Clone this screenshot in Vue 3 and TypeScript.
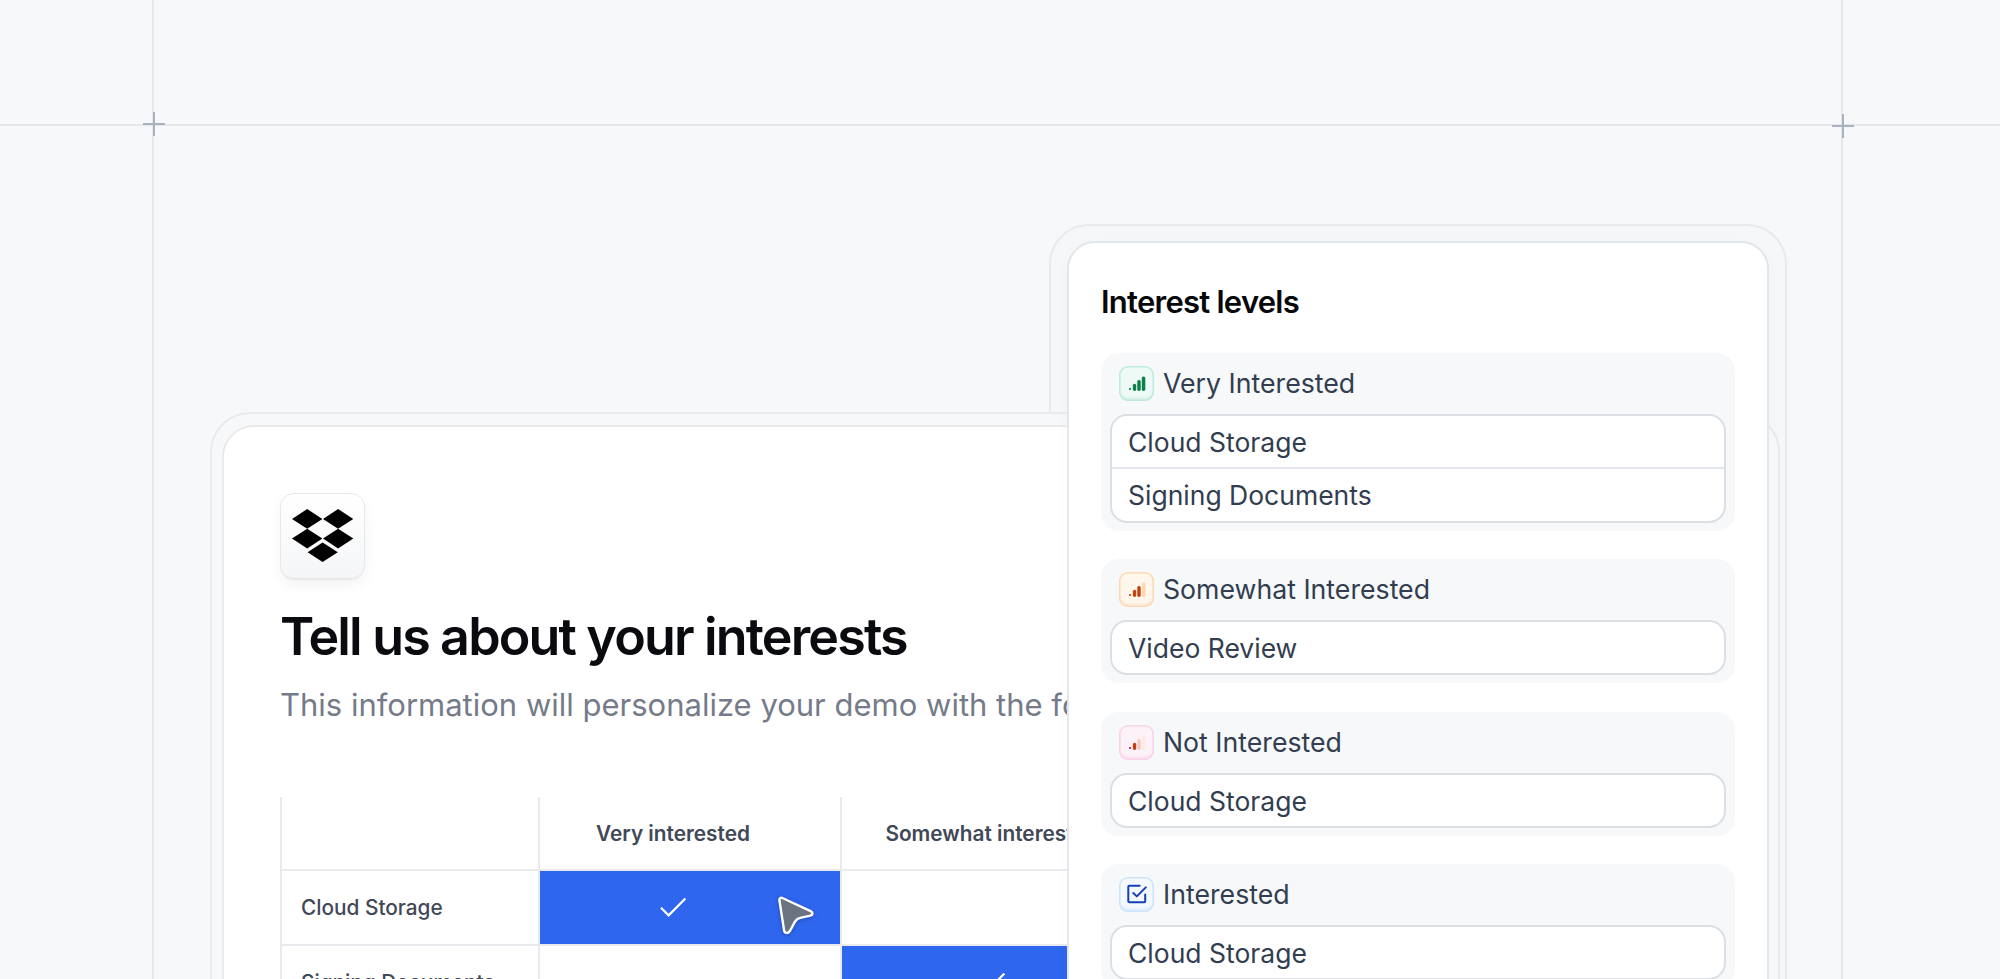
<script setup lang="ts">
import { ref } from 'vue'

interface Bar {
  x: number
  y: number
  w: number
  color: string
}

interface Group {
  name: string
  tone: string
  bars: Bar[]
  items: string[]
}

const signal = (colors: string[]): Bar[] => [
  { x: 10, y: 22, w: 2, color: colors[0] },
  { x: 13.9, y: 17.7, w: 3.3, color: colors[1] },
  { x: 18.3, y: 14, w: 3.4, color: colors[2] },
  { x: 22.8, y: 10.4, w: 3.5, color: colors[3] }
]

const groups = ref<Group[]>([
  {
    name: 'Very Interested',
    tone: 'green',
    bars: signal(['#0b8048', '#0b8048', '#0b8048', '#0b8048']),
    items: ['Cloud Storage', 'Signing Documents']
  },
  {
    name: 'Somewhat Interested',
    tone: 'orange',
    bars: signal(['#c2410c', '#c2410c', '#c2410c', '#fed7aa']),
    items: ['Video Review']
  },
  {
    name: 'Not Interested',
    tone: 'pink',
    bars: signal(['#be185d', '#c2410c', '#f3c9c0', '#ffeadf']),
    items: ['Cloud Storage']
  },
  { name: 'Interested', tone: 'blue', bars: [], items: ['Cloud Storage'] }
])

const columns = ref(['Very interested', 'Somewhat interested'])
const rows = ref([
  { name: 'Cloud Storage', picked: 0 },
  { name: 'Signing Documents', picked: 1 }
])
</script>

<template>
  <div class="canvas">
    <div class="line vertical left"></div>
    <div class="line vertical right"></div>
    <div class="line horizontal"></div>
    <div class="plus plusLeft"></div>
    <div class="plus plusRight"></div>

    <div class="panelFrame"></div>

    <div class="formFrame">
      <div class="form">
        <div class="logo">
          <svg width="62" height="54" viewBox="0 0 62 54">
            <path d="M0 9.9 15.2 0l15.2 9.9-15.2 9.8zM31 9.9 46.1 0l15.2 9.9-15.2 9.8z" />
            <path d="M0 29.6l15.2-9.9 15.2 9.9-15.2 9.8zM31 29.6l15.1-9.9 15.2 9.9-15.2 9.8z" />
            <path d="M15.6 43.2l15-9.8 15.2 9.8-15.2 9.8z" />
          </svg>
        </div>
        <h1 class="title">Tell us about your interests</h1>
        <p class="subtitle">This information will personalize your demo with the following</p>

        <div class="table">
          <div class="row header">
            <div class="cell name"></div>
            <div v-for="column in columns" :key="column" class="cell option">{{ column }}</div>
          </div>
          <div v-for="row in rows" :key="row.name" class="row">
            <div class="cell name">{{ row.name }}</div>
            <div
              v-for="(column, index) in columns"
              :key="column"
              class="cell option"
              :class="{ picked: row.picked === index }"
            >
              <svg v-if="row.picked === index" width="27" height="21" viewBox="0 0 27 21">
                <path d="M1 10.8 8.6 18.4 25.4 1.5" fill="none" stroke="#fff" stroke-width="2.2" />
              </svg>
            </div>
          </div>
        </div>
      </div>
    </div>

    <svg class="cursor" width="44" height="48" viewBox="0 0 44 48">
      <path
        d="M4.4 6.3C4.2 4.3 5.6 3.2 7.4 4L35.6 17.2C38.2 18.4 38 21 35.5 21.6L25.2 23.9C22.4 24.6 21.3 25.3 20 27.6L14.8 37.2C13.3 39.8 9.6 39.4 9.1 36.5Z"
        fill="#6b7280"
        stroke="#fff"
        stroke-width="2.4"
        stroke-linejoin="round"
      />
    </svg>

    <div class="panel">
      <h2 class="panelTitle">Interest levels</h2>
      <div class="groups">
        <div v-for="group in groups" :key="group.name" class="group">
          <div class="groupHead">
            <div class="icon" :class="group.tone">
              <svg width="35" height="35" viewBox="0 0 35 35">
                <rect
                  v-for="bar in group.bars"
                  :key="bar.x"
                  :x="bar.x"
                  :y="bar.y"
                  :width="bar.w"
                  :height="bar.w === 2 ? 2 : 24.9 - bar.y"
                  :rx="bar.w === 2 ? 0.8 : 1.6"
                  :fill="bar.color"
                />
                <g
                  v-if="!group.bars.length"
                  fill="none"
                  stroke="#1540b8"
                  stroke-width="2"
                  stroke-linecap="round"
                  stroke-linejoin="round"
                >
                  <path d="M20.7 8.8H10.3a1 1 0 0 0-1 1v14.4a1 1 0 0 0 1 1h14.9a1 1 0 0 0 1-1v-6.6" />
                  <path d="M14.3 16 17.8 19.4 26.8 10.4" />
                </g>
              </svg>
            </div>
            <span>{{ group.name }}</span>
          </div>
          <div class="items">
            <div v-for="item in group.items" :key="item" class="item">{{ item }}</div>
          </div>
        </div>
      </div>
    </div>
  </div>
</template>

<style>
body {
  margin: 0;
  background: #f7f8fa;
}
</style>

<style scoped>
.canvas {
  position: relative;
  width: 2000px;
  height: 979px;
  overflow: hidden;
  background: #f7f8fa;
  font-family: Inter, 'Liberation Sans', sans-serif;
}
.line {
  position: absolute;
  background: #e5e7e9;
}
.vertical {
  top: 0;
  width: 2px;
  height: 979px;
}
.left {
  left: 152px;
}
.right {
  left: 1841px;
}
.horizontal {
  top: 124px;
  left: 0;
  width: 2000px;
  height: 2px;
}
.plus {
  position: absolute;
  width: 22px;
  height: 24px;
  background:
    linear-gradient(#a9b2bf, #a9b2bf) 10px 0 / 2px 24px no-repeat,
    linear-gradient(#a9b2bf, #a9b2bf) 0 11px / 22px 2px no-repeat;
}
.plusLeft {
  left: 143px;
  top: 112px;
}
.plusRight {
  left: 1832px;
  top: 114px;
}
.panelFrame {
  position: absolute;
  left: 1049px;
  top: 224px;
  width: 738px;
  height: 800px;
  box-sizing: border-box;
  border: 2px solid #e8eaec;
  border-radius: 40px;
  background: #f6f7f9;
}
.formFrame {
  position: absolute;
  left: 210px;
  top: 412px;
  width: 1570px;
  height: 640px;
  box-sizing: border-box;
  padding: 11px 10px;
  border: 2px solid #e8eaec;
  border-radius: 40px;
  background: #f7f8fa;
}
.form {
  height: 700px;
  width: 1545px;
  box-sizing: border-box;
  padding: 66px 0 0 56px;
  border: 2px solid #e8eaec;
  border-radius: 32px;
  background: #fff;
  overflow: hidden;
}
.logo {
  display: flex;
  align-items: center;
  justify-content: center;
  width: 85px;
  height: 86px;
  box-sizing: border-box;
  border: 1px solid #e6e8ea;
  border-radius: 14px;
  background: linear-gradient(#fff, #f5f6f8);
  box-shadow: 0 1px 1px rgba(0, 0, 0, 0.06), 0 6px 14px rgba(0, 0, 0, 0.05);
}
.title {
  margin: 28px 0 0;
  font-size: 52px;
  font-weight: 600;
  line-height: 60px;
  letter-spacing: -1.84px;
  color: #0a0b0f;
  white-space: nowrap;
}
.subtitle {
  margin: 18px 0 0;
  font-size: 31px;
  line-height: 40px;
  color: #757b89;
  white-space: nowrap;
}
.table {
  width: 1160px;
  margin-top: 72px;
  color: #414857;
  font-size: 20.8px;
  font-weight: 500;
}
.row {
  display: flex;
  height: 75px;
  box-sizing: border-box;
  border-bottom: 2px solid #e9eaed;
}
.header {
  height: 74px;
}
.cell {
  display: flex;
  align-items: center;
  box-sizing: border-box;
  border-left: 2px solid #e9eaed;
}
.name {
  width: 258px;
  padding-left: 19px;
}
.option {
  width: 302px;
  padding-right: 34px;
  justify-content: center;
}
.option + .option {
  width: 336px;
}
.header .option {
  font-weight: 600;
}
.picked {
  background: #2f66ee;
}
.cursor {
  position: absolute;
  left: 775px;
  top: 894px;
  filter: drop-shadow(0 1px 2px rgba(0, 0, 0, 0.25));
}
.panel {
  position: absolute;
  left: 1067px;
  top: 241px;
  width: 702px;
  height: 860px;
  box-sizing: border-box;
  padding: 39px 32px;
  border: 2px solid #e3e6ea;
  border-radius: 28px;
  background: #fff;
  box-shadow: 0 4px 16px rgba(0, 0, 0, 0.025);
}
.panelTitle {
  margin: 0;
  font-size: 31px;
  font-weight: 600;
  line-height: 40px;
  letter-spacing: -0.75px;
  color: #07080b;
}
.groups {
  display: flex;
  flex-direction: column;
  gap: 28.3px;
  margin-top: 31px;
}
.group {
  padding: 13px 9px 8px;
  border-radius: 18px;
  background: #f7f8fa;
}
.groupHead {
  display: flex;
  align-items: center;
  gap: 9px;
  padding-left: 9px;
  font-size: 26.7px;
  line-height: 35px;
  color: #323d50;
}
.icon {
  width: 35px;
  height: 35px;
  border-radius: 9px;
}
.icon svg {
  display: block;
}
.green {
  background: #edfaf6;
  box-shadow: inset 0 0 0 1.5px #bcecdb, inset 0 -3px 3px rgba(30, 120, 90, 0.1);
}
.orange {
  background: #fff6ec;
  box-shadow: inset 0 0 0 1.5px #fed9b0, inset 0 -3px 3px rgba(190, 90, 30, 0.1);
}
.pink {
  background: #fdf2f8;
  box-shadow: inset 0 0 0 1.5px #fad3e8, inset 0 -3px 3px rgba(190, 50, 120, 0.1);
}
.blue {
  background: #f3f9ff;
  box-shadow: inset 0 0 0 1.5px #cbe5fb, inset 0 -3px 3px rgba(40, 100, 190, 0.1);
}
.items {
  margin-top: 13px;
  border: 2px solid #dcdfe4;
  border-radius: 17px;
  background: #fff;
}
.item {
  height: 51px;
  padding-left: 16px;
  font-size: 26.5px;
  line-height: 52px;
  color: #323d50;
}
.item + .item {
  height: 52px;
  border-top: 2px solid #e3e6ea;
  line-height: 53px;
}
</style>
